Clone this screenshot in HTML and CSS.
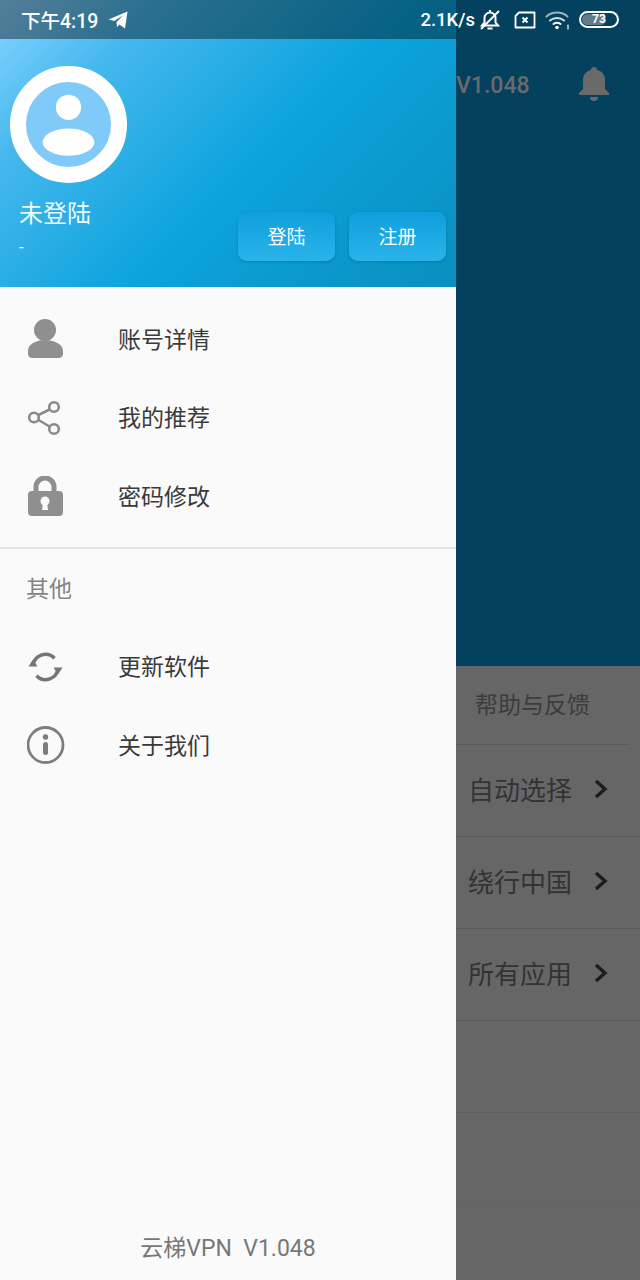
FILE: index.html
```html
<!DOCTYPE html>
<html lang="zh-CN">
<head>
<meta charset="UTF-8" />
<meta name="viewport" content="width=device-width, initial-scale=1" />
<title>云梯VPN</title>
<link rel="stylesheet" href="styles.css">
</head>
<body>
  <div class="screen">
    <!-- Status bar lies over the drawer and the page behind -->
    <div class="statusbar">
      <div class="status-left">
        <span class="clock">下午4:19</span>
        <svg class="tg" viewBox="0 0 20 18"><path d="M0.500 8.500 19.500 0.500 17 17.500 11.500 13.500 9 16 8.500 11 15 4.500 6 10Z" fill="#fff"/></svg>
      </div>
      <div class="status-right">
        <span class="speed">2.1K/s</span>
        <svg class="st-bell" viewBox="0 0 22 22" fill="none" stroke="#fff" stroke-width="2"><path d="M3 16.500h16l-2.500-3V9a5.500 5.500 0 0 0-11 0v4.500z"/><path d="M8.500 19.500h5"/><path d="M11 1v2"/><path d="M2 20 20 2"/></svg>
        <svg class="st-sim" viewBox="0 0 22 18" fill="none" stroke="#fff" stroke-width="1.800"><path d="M5 1.500h15.500v15H1.500V5z" stroke-linejoin="round"/><path d="M8.500 6.500l5 5M13.500 6.500l-5 5"/></svg>
        <svg class="st-wifi" viewBox="0 0 26 20" fill="none" stroke-linecap="round"><path d="M1.500 6.500a16 16 0 0 1 21 0" stroke="#9db4c1" stroke-width="2"/><path d="M5 10.500a11 11 0 0 1 14 0" stroke="#d5e0e6" stroke-width="2"/><path d="M8.500 14a6 6 0 0 1 7 0" stroke="#fff" stroke-width="2"/><circle cx="12" cy="17.500" r="1.800" fill="#fff"/><path d="M23 15v4" stroke="#fff" stroke-width="1.200"/></svg>
        <div class="battery"><span class="battery-fill"></span><span class="battery-num">73</span></div>
      </div>
    </div>

    <aside class="drawer">
      <header class="drawer-head">
        <div class="avatar">
          <svg viewBox="0 0 84 84"><circle cx="42" cy="25" r="12.500" fill="#fff"/><ellipse cx="42" cy="59.500" rx="25.500" ry="13.500" fill="#fff"/></svg>
        </div>
        <div class="head-row">
          <div class="user">
            <div class="user-name">未登陆</div>
            <div class="user-sub">-</div>
          </div>
          <div class="head-btns">
            <button class="btn">登陆</button>
            <button class="btn">注册</button>
          </div>
        </div>
      </header>

      <nav class="menu">
        <a class="item">
          <svg class="ico" viewBox="0 0 38 40"><circle cx="18" cy="11" r="11" fill="#8f8f8f"/><path d="M1 32c0-7 8-11 17-11s18 4 18 11v3c0 2-2 4-4 4H5c-2 0-4-2-4-4z" fill="#8f8f8f"/></svg>
          <span>账号详情</span>
        </a>
        <a class="item">
          <svg class="ico" viewBox="0 0 38 40" fill="none" stroke="#8a8a8a" stroke-width="2.600"><circle cx="27" cy="9" r="4.800"/><circle cx="7" cy="19.500" r="4.800"/><circle cx="27" cy="31" r="4.800"/><path d="M11.500 17 22.500 11.500M11.500 22 22.500 28.500"/></svg>
          <span>我的推荐</span>
        </a>
        <a class="item">
          <svg class="ico" viewBox="0 0 38 40"><path d="M9 17v-6a9 9 0 0 1 18 0v6" fill="none" stroke="#8f8f8f" stroke-width="5"/><rect x="1" y="15" width="35" height="25" rx="4" fill="#8f8f8f"/><circle cx="18" cy="25" r="4.500" fill="#fafafa"/><path d="M16 27h4l1 7h-6z" fill="#fafafa"/></svg>
          <span>密码修改</span>
        </a>
      </nav>

      <div class="menu-title">其他</div>
      <nav class="menu menu-other">
        <a class="item">
          <svg class="ico" viewBox="0 0 38 40" fill="none"><path d="M6 19A12.500 12.500 0 0 1 27.500 11.200" stroke="#757575" stroke-width="3.500"/><path d="M31 21A12.500 12.500 0 0 1 9.500 28.800" stroke="#757575" stroke-width="3.500"/><path d="M1.500 19.500 10.500 19.500 6 12.500z" fill="#757575"/><path d="M26.500 20.500 35.500 20.500 31 27.500z" fill="#757575"/></svg>
          <span>更新软件</span>
        </a>
        <a class="item">
          <svg class="ico" viewBox="0 0 38 38" fill="none"><circle cx="18.500" cy="19" r="17.500" stroke="#7d7d7d" stroke-width="2.800"/><circle cx="18.500" cy="11" r="2.700" fill="#7d7d7d"/><rect x="16" y="16" width="5" height="13" rx="2.500" fill="#7d7d7d"/></svg>
          <span>关于我们</span>
        </a>
      </nav>

      <footer class="drawer-foot">云梯VPN&nbsp; V1.048</footer>
    </aside>

    <!-- Main page, dimmed by the open drawer -->
    <main class="behind">
      <div class="behind-top">
        <span class="behind-version">V1.048</span>
        <svg class="behind-bell" viewBox="0 0 30 34"><path d="M15 0c2 0 3 1 3 3 5 1 8 5 8 10v9l4 4v2H0v-2l4-4v-9c0-5 3-9 8-10 0-2 1-3 3-3z" fill="#6a6a6a"/><path d="M11 30h8a4 4 0 0 1-8 0z" fill="#6a6a6a"/></svg>
      </div>
      <div class="behind-list">
        <div class="help">帮助与反馈</div>
        <div class="row"><span>自动选择</span><svg class="chev" viewBox="0 0 14 20" fill="none" stroke="#1c1c1c" stroke-width="3.400"><path d="M2 2l9 8-9 8"/></svg></div>
        <div class="row"><span>绕行中国</span><svg class="chev" viewBox="0 0 14 20" fill="none" stroke="#1c1c1c" stroke-width="3.400"><path d="M2 2l9 8-9 8"/></svg></div>
        <div class="row"><span>所有应用</span><svg class="chev" viewBox="0 0 14 20" fill="none" stroke="#1c1c1c" stroke-width="3.400"><path d="M2 2l9 8-9 8"/></svg></div>
        <div class="row row-empty"></div>
        <div class="row row-faint"></div>
      </div>
    </main>
  </div>
</body>
</html>
```

FILE: styles.css
```css
/* Base */
* {
  box-sizing: border-box;
}
html, body {
  margin: 0;
  padding: 0;
}
body {
  font-family: Roboto, "Noto Sans CJK SC", sans-serif;
  background: #666;
}
.screen {
  position: relative;
  display: flex;
  width: 640px;
  height: 1280px;
  overflow: hidden;
}

/* Status bar */
.statusbar {
  position: absolute;
  top: 0;
  left: 0;
  z-index: 5;
  width: 100%;
  height: 39px;
  padding: 0 21px;
  display: flex;
  align-items: center;
  justify-content: space-between;
  color: #fff;
  background: linear-gradient(to right, rgba(0, 0, 0, 0.4) 456px, transparent 456px);
}
.status-left,
.status-right {
  display: flex;
  align-items: center;
}
.clock {
  font-size: 19.500px;
  font-weight: 500;
}
.tg {
  width: 20px;
  height: 18px;
  margin-left: 10px;
}
.speed {
  font-size: 18.500px;
  font-weight: 500;
}
.st-bell {
  width: 22px;
  height: 22px;
  margin-left: 4px;
}
.st-sim {
  width: 22px;
  height: 18px;
  margin-left: 13px;
}
.st-wifi {
  width: 26px;
  height: 20px;
  margin-left: 9px;
}
.battery {
  position: relative;
  width: 40px;
  height: 17px;
  margin-left: 8px;
  border: 2px solid #fff;
  border-radius: 9px;
  overflow: hidden;
  text-align: center;
}
.battery-fill {
  position: absolute;
  top: 1px;
  bottom: 1px;
  left: 1px;
  width: 68%;
  background: #5f7c8c;
  border-radius: 6px;
}
.battery-num {
  position: relative;
  display: block;
  font-size: 12px;
  font-weight: 700;
  line-height: 13px;
}

/* Drawer */
.drawer {
  position: relative;
  z-index: 2;
  flex: 0 0 456px;
  display: flex;
  flex-direction: column;
  background: #fafafa;
}
.drawer-head {
  height: 287px;
  padding: 66px 10px 0;
  background: linear-gradient(135deg, #8ad4ff 0%, #45b8ee 22%, #0ca3dc 56%, #0a8fbf 100%);
  color: #fff;
}
.avatar {
  width: 117px;
  height: 117px;
  border: 16px solid #fff;
  border-radius: 50%;
  background: #7fcaf8;
}
.avatar svg {
  display: block;
  width: 100%;
  height: 100%;
}
.head-row {
  display: flex;
  justify-content: space-between;
}
.user {
  padding: 14px 0 0 9px;
}
.user-name {
  font-size: 24px;
  line-height: 34px;
  color: #eefaff;
}
.user-sub {
  font-size: 17px;
  line-height: 32px;
}
.head-btns {
  display: flex;
  gap: 14px;
  padding-top: 29px;
}
.btn {
  width: 97px;
  height: 49px;
  padding: 0 0 2px;
  border: 0;
  border-radius: 9px;
  font-family: inherit;
  font-size: 19px;
  color: #fff;
  background: linear-gradient(to bottom, #109fdc, #29b3ea);
  box-shadow: 0 1px 3px rgba(0, 60, 100, 0.3);
}

.menu {
  padding: 13px 0 11px;
  border-bottom: 2px solid #e3e3e3;
}
.menu-other {
  padding: 0;
  border-bottom: 0;
}
.item {
  display: flex;
  align-items: center;
  height: 78.500px;
  padding-left: 27px;
  font-size: 23px;
  color: #3a3a3a;
}
.item span {
  padding-bottom: 3px;
}
.ico {
  flex: 0 0 38px;
  width: 38px;
  height: 40px;
  margin-right: 53px;
}
.menu-title {
  height: 79px;
  padding: 22px 0 0 26px;
  font-size: 23px;
  line-height: 38px;
  color: #848484;
}
.drawer-foot {
  margin-top: auto;
  padding-bottom: 14px;
  text-align: center;
  font-size: 23px;
  line-height: 34px;
  color: #777;
}

/* Page behind the drawer */
.behind {
  flex: 1;
  display: flex;
  flex-direction: column;
}
.behind-top {
  height: 666px;
  padding: 67px 31px 0 0;
  display: flex;
  justify-content: space-between;
  align-items: flex-start;
  background: #03415f;
}
.behind-version {
  font-size: 23px;
  font-weight: 500;
  line-height: 38px;
  color: #6a6a6a;
}
.behind-bell {
  width: 30px;
  height: 34px;
}
.behind-list {
  flex: 1;
  background: #666;
}
.help {
  width: 174px;
  height: 79px;
  padding: 21px 0 0 19px;
  border-bottom: 1px solid #5a5a5a;
  font-size: 23px;
  line-height: 37px;
  color: #3c3c3c;
}
.row {
  display: flex;
  align-items: center;
  height: 92px;
  padding-left: 12px;
  border-bottom: 1px solid #5a5a5a;
  font-size: 26px;
  color: #333;
}
.row span {
  padding-bottom: 4px;
}
.row-empty {
  border-bottom-color: #5f5f5f;
}
.row-faint {
  border-bottom-color: #636363;
}
.chev {
  width: 14px;
  height: 20px;
  margin: 0 0 3px 22px;
}
```
